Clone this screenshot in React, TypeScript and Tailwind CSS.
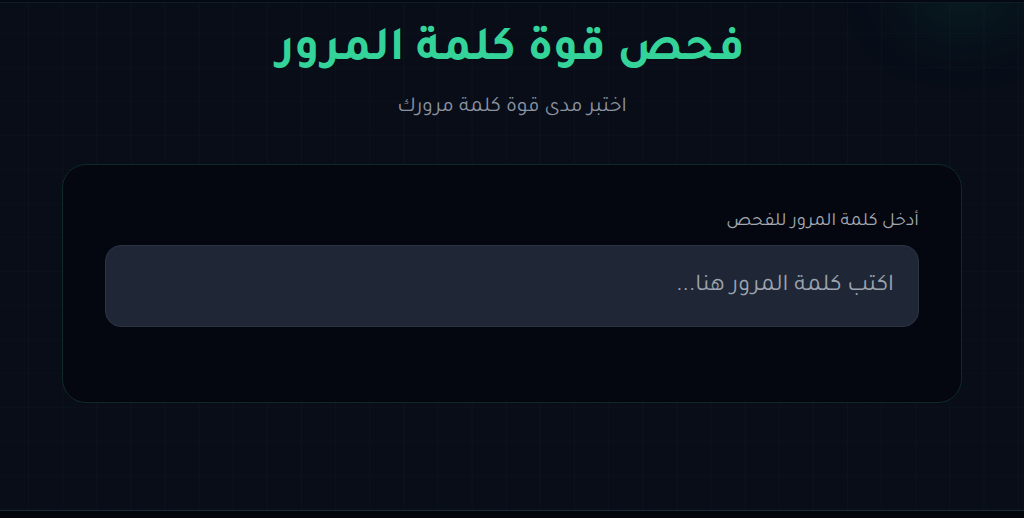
import React from "react";

export default function App() {
  return (
    <div
      dir="rtl"
      className="relative w-[1024px] h-[518px] overflow-hidden bg-[#080d18] font-['Tajawal',sans-serif]"
    >
      <div className="pointer-events-none absolute inset-0 bg-[linear-gradient(to_right,rgba(148,163,184,0.035)_1px,transparent_1px),linear-gradient(to_bottom,rgba(148,163,184,0.02)_1px,transparent_1px)] bg-[size:34.13px_34px] bg-[position:28px_33px]" />
      <div className="pointer-events-none absolute -top-[40px] right-[10px] w-[100px] h-[50px] rounded-full bg-emerald-500/20 blur-2xl" />
      <div className="relative flex flex-col h-full">
        <div className="h-[3px] bg-[#050912] border-b border-[#111a29]" />
        <main className="flex-1 flex flex-col items-center">
          <h1 className="mt-[21px] text-[48px] leading-[56px] font-bold text-[#34d399] -translate-x-[1px]">
            فحص قوة كلمة المرور
          </h1>
          <p className="mt-[14px] text-[21.3px] leading-[28px] text-[#8b93a1]">
            اختبر مدى قوة كلمة مرورك
          </p>
          <section className="mt-[42px] w-[900px] h-[239px] rounded-[24px] border border-[#0f2a26] bg-[#04070f] px-[42px] pt-[46px]">
            <label className="block text-[18.75px] leading-[24px] text-[#a1a8b3] mb-[10px]">
              أدخل كلمة المرور للفحص
            </label>
            <div className="h-[82px] rounded-[16px] border border-[#2b3443] bg-[#1f2736] flex items-center px-[24px] pt-[2px]">
              <span className="text-[24px] text-[#9ca3af]">اكتب كلمة المرور هنا...</span>
            </div>
          </section>
        </main>
        <div className="h-[8px] bg-[#03060d] border-t border-[#1a2536]" />
      </div>
    </div>
  );
}
